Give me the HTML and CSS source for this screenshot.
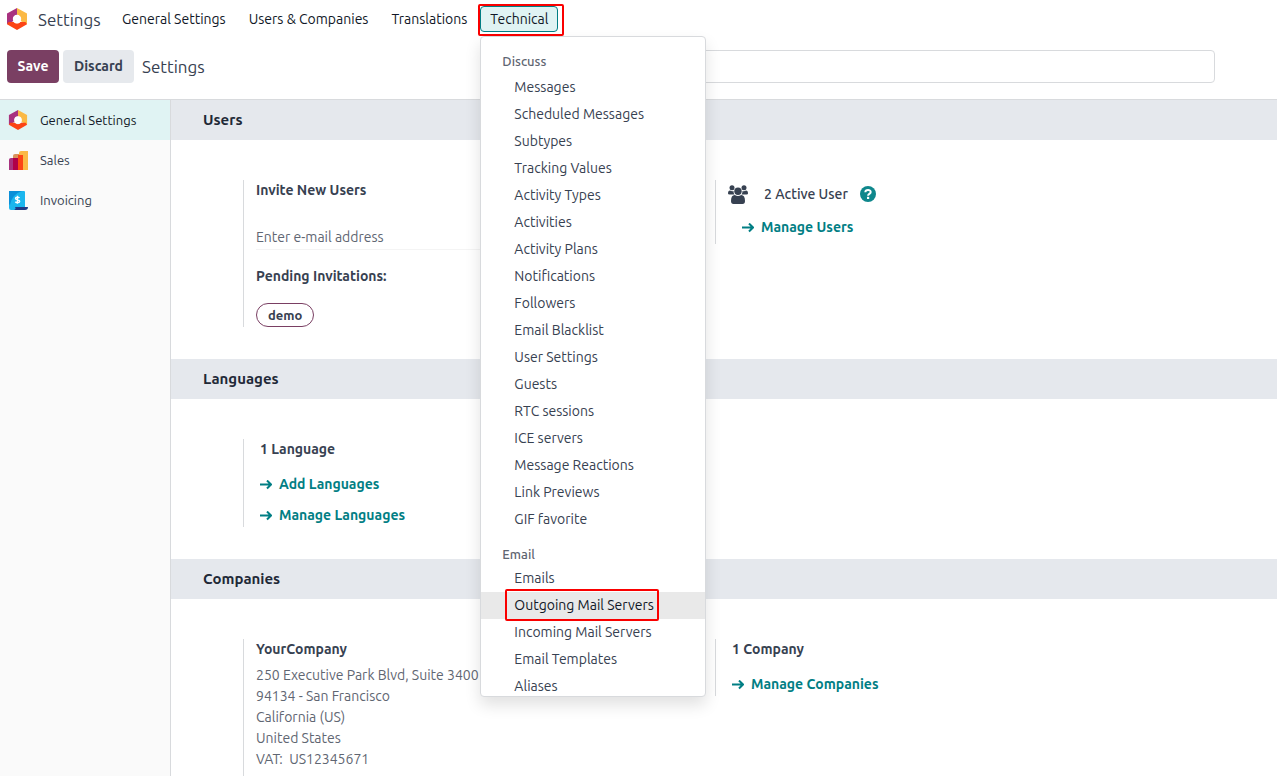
FILE: index.html
```html
<!DOCTYPE html>
<html lang="en">
<head>
<meta charset="utf-8">
<title>Settings</title>
<meta name="viewport" content="width=device-width, initial-scale=1">
<link rel="stylesheet" href="styles.css">
</head>
<body>
<svg class="sprite" aria-hidden="true">
  <symbol id="hex" viewBox="0 0 20 22">
    <path fill="#a8327f" d="M10 0v7.2a3.9 3.9 0 0 0-3.4 5.8L0 16.2V5.6z"/>
    <path fill="#fbb945" d="M10 0v7.2a3.9 3.9 0 0 1 3.4 5.8l6.6 3.2V5.6z"/>
    <path fill="#fc4415" d="M6 14 1.500 14 0 16.2 10 22l10-5.8-1.500-2.200H13.400a4.500 4.500 0 0 1-6.800 0z"/>
    <circle cx="10" cy="11" r="4.200" fill="#fff"/>
  </symbol>
  <symbol id="arrow" viewBox="0 0 12 10">
    <path d="M0 4.500h11M7 .5l4 4-4 4" fill="none" stroke="currentColor" stroke-width="2"/>
  </symbol>
</svg>
<div class="app">
  <header class="navbar">
    <a class="brand" href="#"><svg class="brand-icon" aria-hidden="true"><use href="#hex"/></svg>Settings</a>
    <nav class="menu" aria-label="Main">
      <button class="menu-item" type="button">General Settings</button>
      <button class="menu-item" type="button">Users &amp; Companies</button>
      <button class="menu-item" type="button">Translations</button>
      <div class="dropdown">
        <button class="menu-item open marked" type="button" aria-expanded="true">Technical</button>
        <div class="dropdown-menu">
          <h3 class="group-title">Discuss</h3>
          <a class="entry" href="#">Messages</a>
          <a class="entry" href="#">Scheduled Messages</a>
          <a class="entry" href="#">Subtypes</a>
          <a class="entry" href="#">Tracking Values</a>
          <a class="entry" href="#">Activity Types</a>
          <a class="entry" href="#">Activities</a>
          <a class="entry" href="#">Activity Plans</a>
          <a class="entry" href="#">Notifications</a>
          <a class="entry" href="#">Followers</a>
          <a class="entry" href="#">Email Blacklist</a>
          <a class="entry" href="#">User Settings</a>
          <a class="entry" href="#">Guests</a>
          <a class="entry" href="#">RTC sessions</a>
          <a class="entry" href="#">ICE servers</a>
          <a class="entry" href="#">Message Reactions</a>
          <a class="entry" href="#">Link Previews</a>
          <a class="entry" href="#">GIF favorite</a>
          <h3 class="group-title">Email</h3>
          <a class="entry" href="#">Emails</a>
          <a class="entry current" href="#"><span class="marked">Outgoing Mail Servers</span></a>
          <a class="entry" href="#">Incoming Mail Servers</a>
          <a class="entry" href="#">Email Templates</a>
          <a class="entry" href="#">Aliases</a>
        </div>
      </div>
    </nav>
  </header>

  <div class="control-panel">
    <button class="btn primary" type="button">Save</button>
    <button class="btn secondary" type="button">Discard</button>
    <h1 class="title">Settings</h1>
    <input class="search" type="search" aria-label="Search">
  </div>

  <div class="body">
    <nav class="sidebar" aria-label="Settings sections">
      <a class="tab active" href="#"><svg class="tab-icon" aria-hidden="true"><use href="#hex"/></svg>General Settings</a>
      <a class="tab" href="#"><svg class="tab-icon" viewBox="0 0 20 20" aria-hidden="true">
        <path fill="#fbb945" d="M11 3q0-2 2-2h7v19h-9z"/><path fill="#d9925c" d="M5 6q0-2 2-2h4v5H5z"/><path fill="#a8327f" d="M1 9.500Q1 8 3 8h3v12H1z"/><path fill="#b00048" d="M5 8h5v12H5z"/><path fill="#fc4415" d="M10 5h5v15h-5z"/>
      </svg>Sales</a>
      <a class="tab" href="#"><svg class="tab-icon" viewBox="0 0 20 20" aria-hidden="true">
        <path fill="#1bb6ee" d="M1 1h15a1 1 0 0 1 1 1v15H8v3H3a2 2 0 0 1-2-2z"/><path fill="#0b8fd8" d="M1 1h13Q4 4 2 15L1 14z"/><path fill="#1e3a86" d="M7 17h13a3 3 0 0 1-3 3H6a2 2 0 0 0 1-3z"/>
        <path d="M11.500 8c-1-1.200-4-1.200-4 .4 0 1.800 4.200.9 4.200 2.900 0 1.700-3.200 1.800-4.400.4M9.500 5.800v8" fill="none" stroke="#fff" stroke-width="1.400"/>
      </svg>Invoicing</a>
    </nav>

    <main class="content">
      <h2 class="section-title">Users</h2>
      <section class="section">
        <div class="setting invite">
          <label class="label" for="email">Invite New Users</label>
          <input class="email" id="email" type="email" placeholder="Enter e-mail address">
          <p class="label pending">Pending Invitations:</p>
          <button class="pill" type="button">demo</button>
        </div>
        <div class="setting active-users">
          <p class="count"><svg class="users-icon" viewBox="0 0 20 19" aria-hidden="true">
            <g fill="currentColor"><circle cx="4" cy="2.800" r="2.500"/><circle cx="16" cy="2.800" r="2.500"/><circle cx="10" cy="6.300" r="3.700"/><path d="M0 8.500Q0 5.500 2 5.500q2 1 3.500.4Q5.400 8 6.500 9.600H1.500Q0 9.600 0 8.500zM20 8.500q0-3-2-3-2 1-3.500.4.100 2.100-1 3.700h5q1.500 0 1.500-1.100z"/><path d="M3 16q0-6 3.800-6 3.200 2 6.400 0 3.800 0 3.800 6 0 3-2.500 3h-9Q3 19 3 16z"/></g>
          </svg><span>2 Active User</span><svg class="help-icon" viewBox="0 0 16 16" role="img" aria-label="Help">
            <circle cx="8" cy="8" r="8" fill="currentColor"/><path d="M5.300 6.200C5.500 3.200 10.700 3.300 10.700 6c0 1.900-2.600 1.900-2.600 3.700" fill="none" stroke="#fff" stroke-width="2"/><path d="M7 10.800h2.200V13H7z" fill="#fff"/>
          </svg></p>
          <a class="action" href="#"><svg class="arrow" aria-hidden="true"><use href="#arrow"/></svg>Manage Users</a>
        </div>
      </section>

      <h2 class="section-title">Languages</h2>
      <section class="section">
        <div class="setting languages">
          <p class="label">1 Language</p>
          <a class="action" href="#"><svg class="arrow" aria-hidden="true"><use href="#arrow"/></svg>Add Languages</a>
          <a class="action" href="#"><svg class="arrow" aria-hidden="true"><use href="#arrow"/></svg>Manage Languages</a>
        </div>
      </section>

      <h2 class="section-title">Companies</h2>
      <section class="section">
        <div class="setting company">
          <p class="label">YourCompany</p>
          <address class="address">250 Executive Park Blvd, Suite 3400<br>94134 - San Francisco<br>California (US)<br>United States<br>VAT:&nbsp; US12345671</address>
        </div>
        <div class="setting company-count">
          <p class="label">1 Company</p>
          <a class="action" href="#"><svg class="arrow" aria-hidden="true"><use href="#arrow"/></svg>Manage Companies</a>
        </div>
      </section>
    </main>
  </div>
</div>
</body>
</html>
```
FILE: styles.css
```css
* { box-sizing: border-box; }
body {
  margin: 0;
  font: 400 14px/21px "Ubuntu", "Noto Sans", "Open Sans", sans-serif;
  color: #374151;
  background: #fff;
}
h1, h2, h3, p { margin: 0; font-size: inherit; font-weight: inherit; }
a { color: inherit; text-decoration: none; }
button, input { font: inherit; color: inherit; }
button { border: 0; background: none; padding: 0; cursor: pointer; white-space: nowrap; }
.sprite { position: absolute; width: 0; height: 0; }

.app { display: flex; flex-direction: column; height: 100vh; overflow: hidden; }

.navbar { display: flex; align-items: center; height: 38px; padding-left: 7px; }
.brand { display: flex; align-items: center; gap: 11px; width: 105px; font-size: 17px; }
.brand-icon { width: 20px; height: 22px; }
.menu { display: flex; gap: 3px; }
.menu-item { height: 26px; padding: 0 9px; border: 1px solid transparent; border-radius: 4px; color: #111827; }
.menu-item.open { background: #e0f3f3; border-color: #017e84; }
.marked { position: relative; }
.marked::after { content: ""; position: absolute; inset: -3px -7px -5px -3px; border: 2px solid #fa0000; border-radius: 2px; }

.dropdown { position: relative; }
.dropdown-menu {
  position: absolute;
  z-index: 5;
  top: 30px;
  left: 0;
  width: 226px;
  max-height: calc(100vh - 115px);
  padding-top: 13px;
  overflow: hidden;
  background: #fff;
  border: 1px solid #d8dadd;
  border-radius: 4px;
  box-shadow: 0 8px 16px rgba(0, 0, 0, 0.12);
}
.group-title { padding: 0 0 2px 21px; font-size: 13px; font-weight: 500; line-height: 22px; color: #5f6672; }
.entry + .group-title { padding-top: 10px; padding-bottom: 0; }
.entry { display: block; padding-left: 33px; line-height: 27px; }
.entry.current { background: #e9e9e9; color: #111827; }
.entry .marked { display: inline-block; }
.entry .marked::after { inset: -3px -5px -2px -9px; }

.control-panel { display: flex; align-items: center; height: 62px; padding: 0 62px 4px 7px; border-bottom: 1px solid #d8dadd; }
.btn { height: 33px; border-radius: 4px; font-weight: 600; }
.primary { width: 52px; margin-right: 4px; background: #7a3f63; color: #fff; }
.secondary { width: 71px; margin-right: 8px; background: #e6e9ed; }
.title { font-size: 17px; }
.search { width: 60%; height: 33px; margin-left: auto; border: 1px solid #d8dadd; border-radius: 4px; background: #fff; }

.body { display: flex; flex: 1; min-height: 0; }
.sidebar { flex: 0 0 171px; border-right: 1px solid #d8dadd; background: #fafafa; }
.tab { display: flex; align-items: center; gap: 12px; height: 40px; padding-left: 8px; font-size: 13px; }
.tab.active { background: #e0f3f3; color: #111827; }
.tab-icon { width: 20px; height: 20px; }

.content { flex: 1; min-width: 0; overflow: hidden; }
.section-title { padding-left: 32px; background: #e5e8ed; color: #1f2937; font-size: 15px; font-weight: 600; line-height: 40px; }
.section { display: grid; grid-template-columns: 1fr 1fr; align-items: start; padding: 40px 90px 32px 72px; }
.setting { display: flex; flex-direction: column; align-items: flex-start; border-left: 1px solid #d8dadd; padding-left: 12px; }
.label { font-weight: 600; }
.invite { height: 147px; }
.email { width: 60%; height: 26px; margin-top: 23px; padding: 0; border: 0; border-bottom: 1px solid #f4f4f4; background: none; }
.email::placeholder { color: #5f6672; opacity: 1; }
.pending { margin: 16px 0 16px; }
.pill { height: 24px; padding: 0 11px; border: 1px solid #7a3f63; border-radius: 12px; font-size: 13px; font-weight: 600; }
.active-users { height: 64px; gap: 9px; }
.count { display: flex; align-items: center; height: 28px; font-weight: 500; }
.users-icon { width: 20px; height: 19px; margin-right: 16px; }
.help-icon { width: 16px; height: 16px; margin-left: 12px; color: #0f878c; }
.action { display: flex; align-items: center; gap: 7px; color: #017e84; font-weight: 600; }
.arrow { width: 12px; height: 10px; }
.active-users .action { padding-left: 14px; }
.languages { height: 88px; gap: 10px; padding-left: 16px; }
.languages .label { margin-bottom: 4px; }
.company { height: 180px; }
.company .label { margin-bottom: 5px; }
.address { font-style: normal; color: #5f6672; white-space: nowrap; }
.company-count { height: 57px; gap: 14px; padding-left: 16px; }
```
